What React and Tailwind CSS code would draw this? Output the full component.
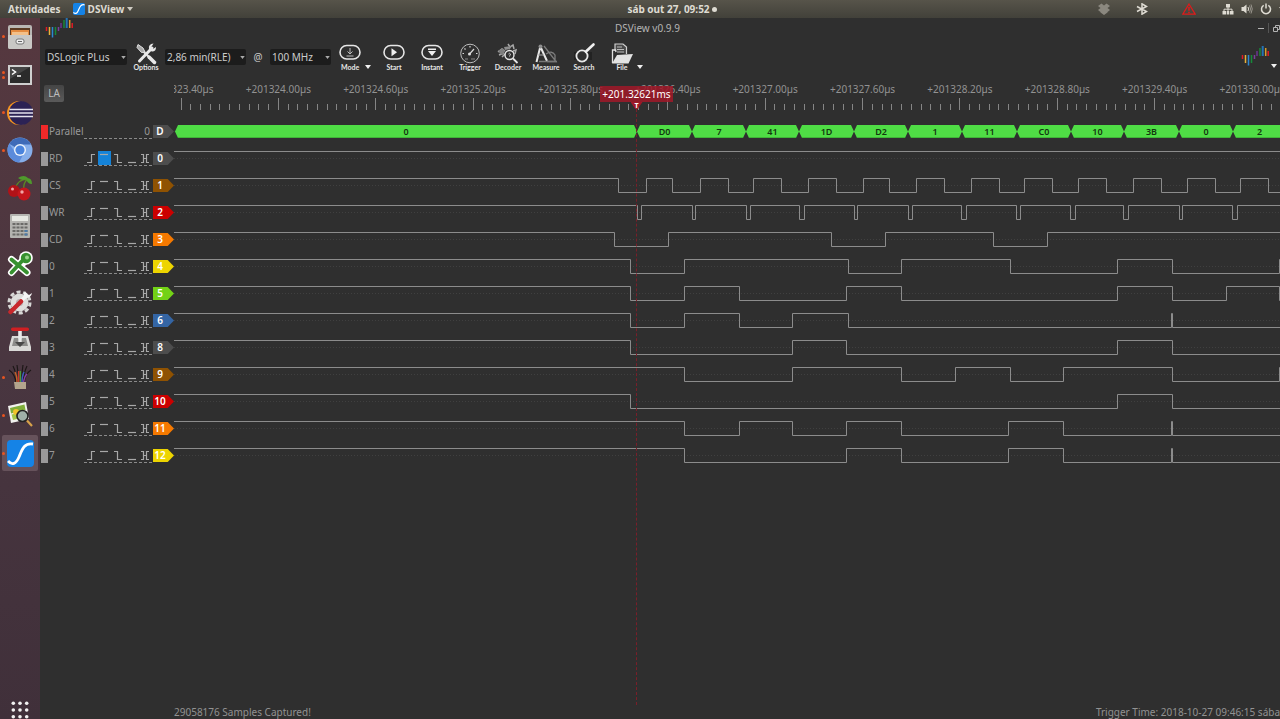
import React, { useState } from 'react'

const TICK_GAP = 97.37
const FIRST_TICK = 7

const rulerLabels = [
  '+201323.40µs',
  '+201324.00µs',
  '+201324.60µs',
  '+201325.20µs',
  '+201325.80µs',
  '+201326.40µs',
  '+201327.00µs',
  '+201327.60µs',
  '+201328.20µs',
  '+201328.80µs',
  '+201329.40µs',
  '+201330.00µs'
]

// decoded words: start position and value
const words = [
  [1, '0'],
  [463, 'D0'],
  [518, '7'],
  [572, '41'],
  [625, '1D'],
  [680, 'D2'],
  [734, '1'],
  [788, '11'],
  [843, 'C0'],
  [897, '10'],
  [950, '3B'],
  [1005, '0'],
  [1059, '2']
]
const WORDS_END = 1112

// each channel starts at `high` and toggles on every edge
const channels = [
  { name: 'RD', index: '0', color: 'bg-[#4d4d4d]', high: true, trigger: 1, edges: [] },
  {
    name: 'CS', index: '1', color: 'bg-[#8f5202]', high: true,
    edges: [444, 472, 498, 526, 554, 579, 607, 634, 662, 689, 715, 742, 770, 797, 825, 850, 878, 904, 932, 959, 987, 1013, 1041, 1066, 1094]
  },
  {
    name: 'WR', index: '2', color: 'bg-[#cc0000]', high: true,
    edges: [463, 467, 518, 521, 572, 576, 625, 630, 680, 683, 734, 738, 787, 792, 842, 846, 896, 901, 949, 954, 1005, 1008, 1058, 1063]
  },
  { name: 'CD', index: '3', color: 'bg-[#f57900]', high: true, edges: [440, 494, 657, 711, 819, 873] },
  { name: '0', index: '4', color: 'bg-[#edd400]', high: true, edges: [456, 510, 674, 727, 836, 943, 998, 1105] },
  { name: '1', index: '5', color: 'bg-[#73d216]', high: true, edges: [456, 510, 565, 672, 727, 943, 998, 1052, 1105] },
  { name: '2', index: '6', color: 'bg-[#3465a4]', high: true, edges: [456, 510, 565, 618, 674, 997, 998] },
  { name: '3', index: '8', color: 'bg-[#4d4d4d]', high: true, edges: [456, 618, 672, 943, 998] },
  { name: '4', index: '9', color: 'bg-[#8f5202]', high: true, edges: [510, 618, 727, 781, 836, 889, 998, 1105] },
  { name: '5', index: '10', color: 'bg-[#cc0000]', high: true, edges: [456, 943, 998] },
  { name: '6', index: '11', color: 'bg-[#f57900]', high: true, edges: [510, 565, 618, 672, 727, 834, 889, 997, 998] },
  { name: '7', index: '12', color: 'bg-[#edd400]', high: true, edges: [510, 672, 727, 834, 889, 997, 998] }
]

const triggers = [
  { label: 'Rising edge', d: 'M2 9.5H6.5V1.5H10' },
  { label: 'High level', d: 'M2 1.5H10' },
  { label: 'Falling edge', d: 'M2 1.5H5.5V9.5H10' },
  { label: 'Low level', d: 'M2 9.5H10' },
  { label: 'Either edge', d: 'M2 1.5H4.5V9.5H2M10 1.5H7.5V9.5H10M4.5 5.5H7.5' }
]

function wavePath(high, edges) {
  let level = high
  let d = `M0 ${level ? 6.5 : 20.5}`
  edges.forEach((x) => {
    level = !level
    d += `H${x + 0.5}V${level ? 6.5 : 20.5}`
  })
  return d + 'H4000'
}

function Caret({ className = 'text-[#dddddd]' }) {
  return (
    <svg width="6" height="4" viewBox="0 0 6 4" className={className}>
      <path d="M0 0H6L3 4Z" fill="currentColor" />
    </svg>
  )
}

// small coloured bars logo
function BarsLogo() {
  return (
    <svg width="28" height="22" viewBox="0 0 28 22" className="shrink-0">
      <path d="M1.5 9V13" stroke="#e01b24" strokeWidth="1.5" />
      <path d="M4.5 9V17" stroke="#e8b13a" strokeWidth="1.5" />
      <path d="M7.500 9V19.500" stroke="#2b87d1" strokeWidth="1.500" />
      <path d="M10.500 9V17" stroke="#178a3a" strokeWidth="1.5" />
      <path d="M13.500 9V13" stroke="#7a3f9d" strokeWidth="1.5" />
      <path d="M16 5V10" stroke="#6a3590" strokeWidth="1.5" />
      <path d="M19 2V10" stroke="#178a3a" strokeWidth="1.5" />
      <path d="M21.700 0V10" stroke="#2473b5" strokeWidth="2" />
      <path d="M24.700 2V10" stroke="#d99b2b" strokeWidth="1.5" />
      <path d="M27.200 5V10" stroke="#e01b24" strokeWidth="1.5" />
    </svg>
  )
}

function DSViewIcon({ size }) {
  return (
    <svg width={size} height={size} viewBox="0 0 27 27">
      <rect width="27" height="27" rx="4" fill="#1583e6" />
      <path d="M1 21C5 25.500 9 24 12 17C15 10 17 2.500 26 4" fill="none" stroke="#fff" strokeWidth="2.800" />
    </svg>
  )
}

const dockItems = [
  {
    label: 'Files', dots: 1,
    icon: (
      <>
        <rect x="1" y="1" width="24" height="24" rx="2" fill="#b9b7b4" />
        <rect x="3" y="4" width="20" height="9" fill="#5b3a22" />
        <path d="M4 6H22V12H4Z" fill="#e58b3f" />
        <path d="M5 8H21V12H5Z" fill="#f3c089" />
        <path d="M1 11H25V23Q25 25 23 25H3Q1 25 1 23Z" fill="#c9c8c5" />
        <rect x="9" y="15" width="8" height="5" rx="2" fill="#eee" stroke="#777" />
        <path d="M11 17.500H15" stroke="#666" />
      </>
    )
  },
  {
    label: 'Terminal', dots: 2,
    icon: (
      <>
        <rect x="1" y="3" width="24" height="20" fill="#cfcfcf" />
        <rect x="3" y="5" width="20" height="16" fill="#2b2b2b" />
        <path d="M3 5H23L3 17Z" fill="#454545" />
        <path d="M5 7.500L8.500 10L5 12.500M10 14H14" fill="none" stroke="#fff" strokeWidth="1.500" />
      </>
    )
  },
  {
    label: 'Eclipse', dots: 1,
    icon: (
      <>
        <circle cx="12" cy="13" r="12" fill="#f7941e" />
        <circle cx="14" cy="13" r="12" fill="#2c2255" />
        <path d="M2.500 9.500H26M2 13H26M2.500 16.500H26" stroke="#e4e2ee" strokeWidth="1.700" />
      </>
    )
  },
  {
    label: 'Chromium', dots: 1,
    icon: (
      <>
        <circle cx="13" cy="13" r="12.500" fill="#86aeea" />
        <path d="M13 13L2.200 6.800A12.500 12.500 0 0 1 24 7.500H13Z" fill="#3f6bb8" />
        <path d="M2.200 6.800A12.500 12.500 0 0 0 12 25.500L17 16L8 15Z" fill="#5b8bdb" />
        <circle cx="13" cy="13" r="6" fill="#eef3fb" />
        <circle cx="13" cy="13" r="4.600" fill="#4a84dd" />
      </>
    )
  },
  {
    label: 'CherryTree', dots: 0,
    icon: (
      <>
        <path d="M8 15C9 8 14 4 21 4M17 16C16 10 18 6 21 4" fill="none" stroke="#5b8a22" strokeWidth="1.300" />
        <path d="M11 3Q17 -1 21 3Q16 7 11 3ZM19 3Q25 2 25 9Q20 9 19 3Z" fill="#4f9a2c" />
        <circle cx="7" cy="16" r="6" fill="#b11217" />
        <circle cx="17" cy="19" r="6.500" fill="#c4161c" />
        <circle cx="5.500" cy="14" r="1.500" fill="#f3a5a5" />
        <circle cx="15" cy="17" r="1.700" fill="#f3a5a5" />
      </>
    )
  },
  {
    label: 'Calculator', dots: 0,
    icon: (
      <>
        <rect x="3" y="1" width="20" height="24" rx="1" fill="#b4b4b0" />
        <rect x="5" y="3" width="16" height="5" fill="#e6e8e2" />
        <path d="M5.500 11H21M5.500 14.500H21M5.500 18H21M5.500 21.500H21" stroke="#6b6b68" strokeWidth="2" strokeDasharray="3 1" />
        <path d="M17.500 18H20.500M17.500 21.500H20.500" stroke="#4c7aa8" strokeWidth="2" />
      </>
    )
  },
  {
    label: 'Xournal', dots: 0,
    icon: (
      <>
        <path d="M4.500 8.500L20 21.500M15 10L4.500 21.500M14 14L19 9" stroke="#fff" strokeWidth="7" strokeLinecap="round" />
        <circle cx="19" cy="7" r="6.800" fill="#fff" />
        <path d="M4.500 8.500L20 21.500M16 9L4.500 21.500" stroke="#37912f" strokeWidth="3.800" strokeLinecap="round" />
        <circle cx="19" cy="7" r="5.200" fill="#37912f" />
        <circle cx="20" cy="6.500" r="2" fill="#9ad58c" />
      </>
    )
  },
  {
    label: 'Settings', dots: 0,
    icon: (
      <>
        <circle cx="12.500" cy="13.500" r="10.500" fill="none" stroke="#d8d8d6" strokeWidth="3" strokeDasharray="4 2.600" />
        <circle cx="12.500" cy="13.500" r="9" fill="#dededc" />
        <circle cx="12.500" cy="13.500" r="3.500" fill="#b9aeb0" />
        <path d="M15 11L20 6" stroke="#f5f5f5" strokeWidth="3.500" />
        <path d="M18 2Q15 7 19 9Q24 9 25 4L22 6L19 4Z" fill="#f5f5f5" />
        <path d="M3.500 23L14 12.500" stroke="#c8282c" strokeWidth="4.500" strokeLinecap="round" />
      </>
    )
  },
  {
    label: 'Installer', dots: 0,
    icon: (
      <>
        <path d="M5 9H21L24 20V24H2V20Z" fill="#d9d9d7" />
        <path d="M7 11H19L21 19H5Z" fill="#8d8d8b" />
        <path d="M11.200 12H14.800V15H18L13 20L8 15H11.200Z" fill="#484848" />
        <rect x="11.200" y="2" width="3.600" height="13" fill="#e9e9e9" />
        <rect x="4" y="0.500" width="18" height="3.500" rx="1.700" fill="#d01f22" />
      </>
    )
  },
  {
    label: 'PulseView', dots: 1,
    icon: (
      <>
        <path d="M9 19Q8 10 2 6M10 19Q9 8 6 2M16 19Q17 8 20 2M17 19Q18 10 24 6M12 19Q11 8 10 1M14 19Q15 8 16 1" fill="none" stroke="#1d1717" strokeWidth="1.200" />
        <path d="M10 19Q10 12 8 8" fill="none" stroke="#c2622b" strokeWidth="1.500" />
        <path d="M11.700 19V7" stroke="#c8352c" strokeWidth="1.500" />
        <path d="M13.400 19V7" stroke="#4a9a3a" strokeWidth="1.500" />
        <path d="M15 19Q15 12 17 8" fill="none" stroke="#3c5fc0" strokeWidth="1.500" />
        <path d="M16.500 19Q17 13 20 10" fill="none" stroke="#8a3fa0" strokeWidth="1.500" />
        <path d="M7 18H19V25H8Z" fill="#b3a58d" />
      </>
    )
  },
  {
    label: 'Image Viewer', dots: 1,
    icon: (
      <>
        <path d="M1 4L19 0L22 17L4 21Z" fill="#f2f2ee" />
        <path d="M3 6L17.500 2.500L18.500 8L4 11.500Z" fill="#7fae3a" />
        <path d="M4.500 12.500L18.500 9L19.500 14.500L6 18Z" fill="#a6c84a" />
        <circle cx="9" cy="10" r="3" fill="#f0c22a" />
        <circle cx="15.500" cy="14" r="5.500" fill="#9fb0a8" stroke="#222" strokeWidth="1.600" />
        <path d="M20 18.500L25 24" stroke="#d8a24a" strokeWidth="2.200" />
      </>
    )
  },
  { label: 'DSView', dots: 1, active: true }
]

const pill = <rect x="1" y="2.500" width="20" height="13.500" rx="6.700" fill="none" stroke="#e6e6e6" strokeWidth="1.600" />

const toolIcons = {
  options: (
    <>
      <path d="M5 5L19 19" stroke="#e0e0e0" strokeWidth="2.200" strokeLinecap="round" />
      <path d="M3 1.500L8 5L10 9L6.500 9.500L2 4.500Z" fill="#a8a8a8" stroke="#e0e0e0" />
      <path d="M17 5L4.500 18" stroke="#e8e8e8" strokeWidth="3" strokeLinecap="round" />
      <path d="M18.500 0.500Q13 1 14 6Q15 9 18 8.500Q21 8 21 4L18 6L16 4.500Z" fill="#e8e8e8" />
      <path d="M14 14L19.500 19.500" stroke="#e8e8e8" strokeWidth="3.500" strokeLinecap="round" />
    </>
  ),
  mode: (
    <>
      {pill}
      <path d="M11 5V11M8.500 8.500L11 11L13.500 8.500M7.500 13H14.500" fill="none" stroke="#bdbdbd" />
    </>
  ),
  start: (
    <>
      {pill}
      <path d="M8.500 5.200L14 9.200L8.500 13.200Z" fill="#f0f0f0" />
    </>
  ),
  instant: (
    <>
      {pill}
      <path d="M7 5.500H15V7H7ZM7 8H15L11 13Z" fill="#f0f0f0" />
    </>
  ),
  trigger: (
    <>
      <circle cx="11" cy="10.500" r="9.300" fill="none" stroke="#bdbdbd" />
      <path d="M11 3V4.500M3.500 10.500H5M17 10.500H18.500M5.500 5.500L6.500 6.500M11 10.500L15 6" stroke="#d8d8d8" strokeWidth="1.200" />
      <circle cx="10.500" cy="11" r="1.500" fill="#e0e0e0" />
      <path d="M6 16H9M12 16H16" stroke="#888" />
    </>
  ),
  decoder: (
    <>
      <path d="M11 1L13 4L16 2L17 6M1 9L5 6L8 8M2 12L7 10M5 14L8 11M16 8L19 7L18 11" fill="none" stroke="#a9a9a9" strokeWidth="1.500" />
      <path d="M7 4L15 3L13 6L8 7Z" fill="#8d8d8d" />
      <path d="M1 7.500L6 5.500L8 8L6 12L3 11Z" fill="#7d7d7d" />
      <circle cx="12.500" cy="12" r="4.500" fill="#2f2f2f" stroke="#e6e6e6" strokeWidth="1.400" />
      <path d="M11.500 11Q12.500 9.500 13.500 11Q13 12 12.500 13.500" fill="none" stroke="#ccc" />
      <path d="M16 15.500L20.500 20" stroke="#e6e6e6" strokeWidth="1.800" />
    </>
  ),
  measure: (
    <>
      <path d="M5 5L1.500 19M6 5L12 18" stroke="#e8e8e8" strokeWidth="2" />
      <circle cx="5.500" cy="3.500" r="2" fill="#8f8f8f" />
      <path d="M3 12H9" stroke="#aaa" />
      <path d="M9 3L21 18.500H12M11 11Q17 7 20 12V18" fill="none" stroke="#7d7d7d" strokeWidth="1.300" />
      <path d="M4 18.500H22" stroke="#777" strokeWidth="1.500" />
    </>
  ),
  search: (
    <>
      <rect x="1" y="9" width="18" height="8" fill="#222" />
      <circle cx="9" cy="13" r="5.600" fill="#2f2f2f" stroke="#e8e8e8" strokeWidth="1.800" />
      <path d="M13 8.500L20.500 1.500" stroke="#f0f0f0" strokeWidth="2.600" strokeLinecap="round" />
    </>
  ),
  file: (
    <>
      <path d="M4 8V1H12L15.500 4V11" fill="#4a4a4a" stroke="#d0d0d0" strokeWidth="1.200" />
      <path d="M6 4H11M6 6.500H13M6 9H13" stroke="#bbb" />
      <path d="M1.500 20V7H4.500L5 9" fill="none" stroke="#e0e0e0" strokeWidth="1.300" />
      <path d="M1 20.500L6 12L22 11L17.500 20.500Z" fill="#e3e3e3" />
    </>
  )
}

const tools = [
  { id: 'start', label: 'Start' },
  { id: 'instant', label: 'Instant' },
  { id: 'trigger', label: 'Trigger' },
  { id: 'decoder', label: 'Decoder' },
  { id: 'measure', label: 'Measure' },
  { id: 'search', label: 'Search' }
]

function ToolButton({ id, label, menu, className = 'w-[38px] justify-center' }) {
  return (
    <button type="button" className={`flex shrink-0 items-end ${className}`}>
      <span className="flex flex-col items-center">
        <svg width="22" height="21" viewBox="0 0 22 21" className="overflow-visible">{toolIcons[id]}</svg>
        <span className="font-[Lato] text-[7px] leading-[7px] font-bold text-[#e6e6e6]">{label}</span>
      </span>
      {menu && <span className="pb-[2px] pl-1"><Caret className="text-[#f0f0f0]" /></span>}
    </button>
  )
}

function Combo({ label, value, className }) {
  return (
    <div className={`relative h-4 shrink-0 ${className}`}>
      <select
        aria-label={label}
        defaultValue={value}
        className="block h-4 w-full appearance-none rounded-xs bg-[#1c1c1c] pl-[2px] text-[10px] leading-4 text-[#cccccc] outline-none"
      >
        <option>{value}</option>
      </select>
      <span className="pointer-events-none absolute inset-y-0 right-[1px] flex items-center">
        <Caret className="h-[3px] w-[5px] text-[#aaaaaa]" />
      </span>
    </div>
  )
}

function TopBar() {
  return (
    <header className="grid h-[18px] grid-cols-[1fr_auto_1fr] items-center bg-linear-to-b from-[#57544a] to-[#42413a] text-[10px] leading-4 font-bold text-[#dedbd2]">
      <div className="flex items-center gap-3 pl-2">
        <button type="button">Atividades</button>
        <button type="button" className="flex items-center gap-[3px]">
          <DSViewIcon size={12} />
          DSView
          <Caret className="text-[#cfccc3]" />
        </button>
      </div>
      <div className="flex items-center gap-[2px] pl-16">
        sáb out 27, 09:52
        <span className="size-[5px] rounded-full bg-[#dedbd2]" />
      </div>
      <div className="flex items-center justify-end text-[#dedbd2]">
        <svg width="12" height="12" viewBox="0 0 12 12" className="mr-[26px]">
          <path d="M3.500 0.500L6 2.500L8.500 0.500L12 3L9.500 5L12 7L9.500 9V9.500L6 12L2.500 9.500V9L0 7L2.500 5L0 3Z" fill="#8b887f" />
        </svg>
        <svg width="12" height="12" viewBox="0 0 12 12" className="mr-[34px]">
          <path d="M1 3.500L10.500 8.500L6 11.200V0.800L10.500 3.500L1 8.500" fill="none" stroke="currentColor" strokeWidth="1.500" />
        </svg>
        <svg width="14" height="12" viewBox="0 0 14 12" className="mr-[26px]">
          <path d="M7 1L13.200 11.200H0.800Z" fill="none" stroke="#e01b1b" strokeWidth="1.200" />
          <path d="M7 4V7.800M7 8.800V10.200" stroke="#e01b1b" strokeWidth="1.500" />
        </svg>
        <svg width="12" height="12" viewBox="0 0 12 12" className="mr-[7px]">
          <path d="M4 1H8V4.500H4ZM0.500 8H4V11.500H0.500ZM8 8H11.500V11.500H8ZM4.700 8H7.300V11.500H4.700Z" fill="currentColor" />
          <path d="M6 4V8M2 8.500V6.200H10V8.500" fill="none" stroke="currentColor" />
        </svg>
        <svg width="12" height="12" viewBox="0 0 12 12" className="mr-[7px]">
          <path d="M0.500 4H2.500L5.500 1.500V10.500L2.500 8H0.500Z" fill="currentColor" />
          <path d="M7 4Q8.200 6 7 8" fill="none" stroke="currentColor" />
          <path d="M8.500 2.500Q10.500 6 8.500 9.500M10 1.500Q12.500 6 10 10.500" fill="none" stroke="#9a978e" />
        </svg>
        <svg width="12" height="12" viewBox="0 0 12 12" className="mr-[7px]">
          <path d="M3.700 2.300A4.500 4.500 0 1 0 8.300 2.300M6 0.500V5.500" fill="none" stroke="currentColor" strokeWidth="1.500" />
        </svg>
        <svg width="1" height="4" viewBox="0 0 1 4">
          <path d="M0 0H1V1.300Z" fill="currentColor" />
        </svg>
      </div>
    </header>
  )
}

function Dock() {
  return (
    <nav className="flex w-10 shrink-0 flex-col justify-between bg-linear-to-b from-[#56383f] via-[#493640] to-[#40303a]">
      <div className="flex h-[454px] flex-col">
        {dockItems.map((item) => (
          <button
            key={item.label}
            type="button"
            aria-label={item.label}
            className="relative flex min-h-0 w-full flex-1 items-center justify-center"
          >
            <span className={`flex size-9 shrink-0 items-center justify-center rounded-xs ${item.active ? 'bg-[#66525b]' : ''}`}>
              {item.active ? <DSViewIcon size={27} /> : <svg width="26" height="26" viewBox="0 0 26 26">{item.icon}</svg>}
            </span>
            <span className="absolute inset-y-0 left-[2px] flex flex-col items-center justify-center gap-[2px]">
              {Array.from({ length: item.dots }, (_, i) => (
                <span key={i} className="size-[3px] rounded-full bg-[#e95420]" />
              ))}
            </span>
          </button>
        ))}
      </div>
      <button type="button" aria-label="Show applications" className="flex justify-center">
        <svg width="18" height="18" viewBox="0 0 18 18" fill="#f2f2f2">
          {[2.3, 9, 15.7].map((y) => [2.3, 9, 15.7].map((x) => <circle key={`${x}-${y}`} cx={x} cy={y} r="1.800" />))}
        </svg>
      </button>
    </nav>
  )
}

function TitleBar() {
  return (
    <div className="flex h-5 items-start pl-[5px] text-[#b4b4b4]">
      <BarsLogo />
      <h1 className="flex-1 pr-9 text-center text-[10px] leading-5">DSView v0.9.9</h1>
      <div className="flex h-5 items-center gap-1">
        <button type="button" aria-label="Minimize" className="h-px w-[6px] bg-[#b4b4b4]" />
        <span className="h-[10px] w-px bg-[#555555]" />
        <button type="button" aria-label="Restore">
          <svg width="7" height="7" viewBox="0 0 7 7" fill="none" stroke="currentColor">
            <path d="M2.500 2V0.500H6.500V4.500H5M0.500 2.500H4.500V6.500H0.500Z" />
          </svg>
        </button>
      </div>
    </div>
  )
}

function Toolbar() {
  return (
    <div className="flex h-[38px] items-center pl-[5px]">
      <Combo label="Device" value="DSLogic PLus" className="w-[82px]" />
      <ToolButton id="options" label="Options" />
      <Combo label="Sample duration" value="2,86 min(RLE)" className="w-[81px]" />
      <span className="w-6 text-center text-[10px] leading-4 text-[#c8c8c8]">@</span>
      <Combo label="Sample rate" value="100 MHz" className="w-[61px]" />
      <ToolButton id="mode" label="Mode" menu className="w-11 pl-2" />
      {tools.map((t) => <ToolButton key={t.id} {...t} />)}
      <ToolButton id="file" label="File" menu className="w-11 pl-2" />
      <button type="button" aria-label="Logo menu" className="ml-auto flex items-end gap-[2px] pr-[3px]">
        <BarsLogo />
        <Caret className="text-[#f0f0f0]" />
      </button>
    </div>
  )
}

function Ruler() {
  return (
    <svg width="100%" height="42" className="min-w-0 flex-1">
      {rulerLabels.map((label, i) => {
        const x = FIRST_TICK + i * TICK_GAP
        return (
          <g key={label}>
            <text x={x} y="17" textAnchor="middle" fontSize="10" fill="#929292">{label}</text>
            {Array.from({ length: 10 }, (_, k) => {
              const tx = Math.floor(x + (k * TICK_GAP) / 10) + 0.5
              return <path key={k} d={k === 0 ? `M${tx} 22V34` : `M${tx} 28V34`} stroke="#858585" />
            })}
          </g>
        )
      })}
    </svg>
  )
}

function RowHeader({ name, index, color, handle, children }) {
  return (
    <div className="flex w-[134px] shrink-0 items-center">
      <span className={`ml-px h-[14px] w-[7px] ${handle}`} />
      <span className="w-9 pl-px text-[10px] leading-[13px] whitespace-nowrap text-[#999999]">{name}</span>
      <div className="mr-px flex h-[15px] w-[68px] border-b border-dashed border-[#8a8a8a]">{children}</div>
      <button
        type="button"
        className={`h-[13px] w-[21px] pr-[7px] text-center text-[10px] leading-[13px] font-semibold text-white [clip-path:polygon(0_0,70%_0,100%_50%,70%_100%,0_100%)] ${color}`}
      >
        {index}
      </button>
    </div>
  )
}

function ParallelRow() {
  return (
    <div className="flex h-[27px]">
      <RowHeader name="Parallel" index="D" color="bg-[#4d4d4d]" handle="bg-[#ef2929]">
        <span className="flex-1 pr-[2px] text-right text-[10px] leading-[14px] text-[#999999]">0</span>
      </RowHeader>
      <svg width="100%" height="27" className="min-w-0 flex-1">
        {words.map(([x, value], i) => {
          const end = i + 1 < words.length ? words[i + 1][0] : WORDS_END
          return (
            <g key={x}>
              <path d={`M${x} 13.500L${x + 3} 7H${end - 3}L${end} 13.500L${end - 3} 20H${x + 3}Z`} fill="#4fdd45" />
              <path d={`M${x + 3} 19.500H${end - 3}`} stroke="#3fb537" />
              <text x={(x + end) / 2} y="17" textAnchor="middle" fontSize="9" fontWeight="600" fill="#12380f">{value}</text>
            </g>
          )
        })}
      </svg>
    </div>
  )
}

function ChannelRow({ channel }) {
  const [trigger, setTrigger] = useState(channel.trigger)

  return (
    <div className="flex h-[27px]">
      <RowHeader name={channel.name} index={channel.index} color={channel.color} handle="bg-[#999999]">
        {triggers.map((t, i) => (
          <button
            key={t.label}
            type="button"
            aria-label={`${channel.name} ${t.label}`}
            aria-pressed={trigger === i}
            onClick={() => setTrigger(trigger === i ? undefined : i)}
            className={`flex flex-1 items-center justify-center ${trigger === i ? 'bg-[#1583d8]' : ''}`}
          >
            <svg width="12" height="11" viewBox="0 0 12 11" className="shrink-0">
              <path d={t.d} fill="none" stroke="#a8a8a8" strokeWidth="1.200" />
            </svg>
          </button>
        ))}
      </RowHeader>
      <svg width="100%" height="27" className="min-w-0 flex-1">
        <path d="M0 13.500H4000" stroke="#404040" strokeDasharray="1 2" />
        <path d={wavePath(channel.high, channel.edges)} fill="none" stroke="#8c8c8c" />
      </svg>
    </div>
  )
}

// trigger position marker, drawn over the ruler and all rows
function TriggerCursor() {
  return (
    <div className="pointer-events-none absolute top-[10px] bottom-0 left-[560px] flex w-[73px] flex-col items-center">
      <div className="h-4 w-full bg-[#a01828]/85 text-center text-[10px] leading-4 whitespace-nowrap text-white">+201.32621ms</div>
      <div className="h-[7px] w-3 bg-[#a01828] text-center text-[7px] leading-[7px] font-bold text-white [clip-path:polygon(0_0,100%_0,60%_100%,40%_100%)]">T</div>
      <div className="w-px flex-1 border-l border-dashed border-[#7a1f29]" />
    </div>
  )
}

export default function App() {
  return (
    <div className="flex min-h-screen flex-col overflow-hidden bg-[#2f2f2f] font-['Noto_Sans',sans-serif]">
      <TopBar />
      <div className="flex flex-1">
        <Dock />
        <main className="flex min-w-0 flex-1 flex-col">
          <TitleBar />
          <Toolbar />
          <section className="relative flex-1">
            <div className="flex h-[42px]">
              <div className="w-[134px] shrink-0 pt-[9px] pl-1">
                <button type="button" className="block h-[17px] w-5 rounded-xs bg-linear-to-b from-[#454545] to-[#5a5a5a] text-[10px] leading-[17px] text-[#bdbdbd]">
                  LA
                </button>
              </div>
              <Ruler />
            </div>
            <ParallelRow />
            {channels.map((c) => <ChannelRow key={c.index} channel={c} />)}
            <TriggerCursor />
          </section>
          <footer className="flex h-[14px] justify-between pl-[134px] text-[10px] leading-[14px] whitespace-nowrap text-[#929292]">
            <span>29058176 Samples Captured!</span>
            <span>Trigger Time: 2018-10-27 09:46:15 sába</span>
          </footer>
        </main>
      </div>
    </div>
  )
}
